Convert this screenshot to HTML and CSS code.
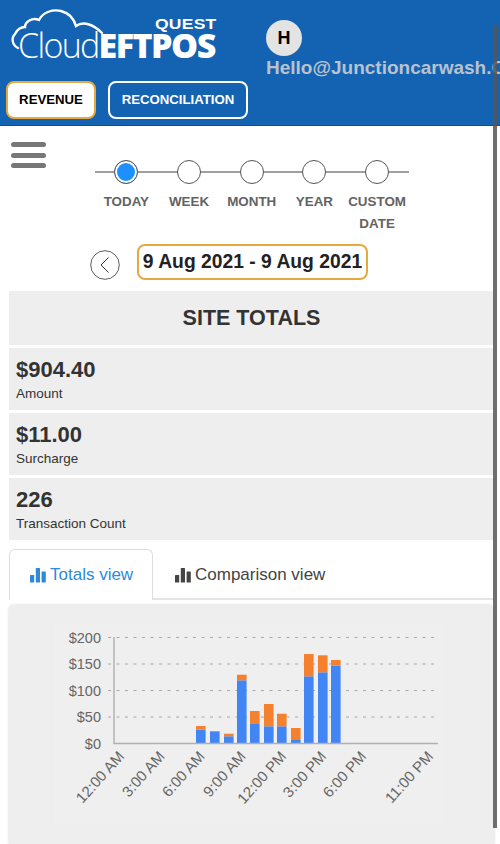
FILE: index.html
```html
<!DOCTYPE html>
<html lang="en">
<head>
<meta charset="utf-8">
<title>CloudEFTPOS</title>
<link rel="stylesheet" href="styles.css">
</head>
<body>
<header class="topbar">
  <div class="brand-row">
    <div class="logo">
      <svg class="logo-cloud" viewBox="0 0 110 50" width="110" height="50" aria-hidden="true">
        <path d="M18 48 C12 45 11 38 15 34 C17 30 21 27 25 27 C25 22 32 17 39 20 C43 12 53 9 61 11 C69 13 74 19 76 26 C83 21 93 24 102 33" fill="none" stroke="#fff" stroke-width="2.4" stroke-linecap="round"/>
      </svg>
      <span class="logo-quest">QUEST</span>
      <span class="logo-text"><span class="logo-cloudword">Cloud</span><span class="logo-eftpos">EFTPOS</span></span>
    </div>
    <div class="user">
      <div class="avatar">H</div>
      <div class="email">Hello@Junctioncarwash.Com</div>
    </div>
  </div>
  <nav class="top-tabs">
    <button class="top-tab active">REVENUE</button>
    <button class="top-tab">RECONCILIATION</button>
  </nav>
</header>

<div class="scroll-thumb"></div>

<main class="content">
  <div class="filter-row">
    <div class="burger"><span></span><span></span><span></span></div>
    <div class="stepper">
      <div class="step-line"></div>
      <div class="step selected"><span class="dot"></span><span class="step-label">TODAY</span></div>
      <div class="step"><span class="dot"></span><span class="step-label">WEEK</span></div>
      <div class="step"><span class="dot"></span><span class="step-label">MONTH</span></div>
      <div class="step"><span class="dot"></span><span class="step-label">YEAR</span></div>
      <div class="step"><span class="dot"></span><span class="step-label">CUSTOM DATE</span></div>
    </div>
  </div>

  <div class="date-row">
    <button class="prev" aria-label="Previous">
      <svg viewBox="0 0 30 30" width="30" height="30"><circle cx="15" cy="15" r="14.3" fill="#fff" stroke="#333" stroke-width="0.8"/><path d="M18.5 7.5 L11 15 L18.5 22.5" fill="none" stroke="#333" stroke-width="1"/></svg>
    </button>
    <div class="date-box">9 Aug 2021 - 9 Aug 2021</div>
  </div>

  <section class="totals">
    <h2 class="totals-title">SITE TOTALS</h2>
    <div class="metric"><div class="metric-value">$904.40</div><div class="metric-label">Amount</div></div>
    <div class="metric"><div class="metric-value">$11.00</div><div class="metric-label">Surcharge</div></div>
    <div class="metric"><div class="metric-value">226</div><div class="metric-label">Transaction Count</div></div>
  </section>

  <div class="view-tabs">
    <div class="view-tab active">
      <svg class="bars-icon" viewBox="0 0 16 16" width="16" height="16"><rect x="0" y="8" width="4.2" height="7.5" rx="0.6"/><rect x="5.8" y="1" width="4.2" height="14.5" rx="0.6"/><rect x="11.6" y="4.5" width="4.2" height="11" rx="0.6"/></svg>
      Totals view
    </div>
    <div class="view-tab">
      <svg class="bars-icon" viewBox="0 0 16 16" width="16" height="16"><rect x="0" y="8" width="4.2" height="7.5" rx="0.6"/><rect x="5.8" y="1" width="4.2" height="14.5" rx="0.6"/><rect x="11.6" y="4.5" width="4.2" height="11" rx="0.6"/></svg>
      Comparison view
    </div>
  </div>

  <section class="chart-card">
    <svg class="chart" viewBox="0 0 485 239" width="485" height="239">
      <rect class="plot-bg" x="45" y="20" width="391" height="198"/>
      <g class="grid">
        <line x1="99" y1="32.5" x2="430" y2="32.5"/>
        <line x1="99" y1="59" x2="430" y2="59"/>
        <line x1="99" y1="85.5" x2="430" y2="85.5"/>
        <line x1="99" y1="112" x2="430" y2="112"/>
      </g>
      <g class="ylabels">
        <text x="92" y="37.5">$200</text>
        <text x="92" y="64">$150</text>
        <text x="92" y="90.5">$100</text>
        <text x="92" y="117">$50</text>
        <text x="92" y="143.5">$0</text>
      </g>
      <g class="bar-blue">
        <rect x="187" y="124.7" width="9.6" height="13.3"/>
        <rect x="201" y="126.3" width="9.6" height="11.7"/>
        <rect x="215" y="131.3" width="9.6" height="6.7"/>
        <rect x="228" y="75.3" width="9.6" height="62.7"/>
        <rect x="241" y="118.3" width="9.6" height="19.7"/>
        <rect x="255" y="121.3" width="9.6" height="16.7"/>
        <rect x="268" y="121.3" width="9.6" height="16.7"/>
        <rect x="282" y="135" width="9.6" height="3"/>
        <rect x="295" y="71.3" width="9.6" height="66.7"/>
        <rect x="309" y="67.3" width="9.6" height="70.7"/>
        <rect x="322" y="60.7" width="9.6" height="77.3"/>
      </g>
      <g class="bar-orange">
        <rect x="187" y="121" width="9.6" height="3.7"/>
        <rect x="215" y="128.7" width="9.6" height="2.6"/>
        <rect x="228" y="69.7" width="9.6" height="5.6"/>
        <rect x="241" y="106" width="9.6" height="12.3"/>
        <rect x="255" y="99" width="9.6" height="22.3"/>
        <rect x="268" y="108.7" width="9.6" height="12.6"/>
        <rect x="282" y="123" width="9.6" height="12"/>
        <rect x="295" y="49" width="9.6" height="22.3"/>
        <rect x="309" y="50.3" width="9.6" height="17"/>
        <rect x="322" y="55" width="9.6" height="5.7"/>
      </g>
      <g class="axis">
        <line x1="105" y1="32" x2="105" y2="139"/>
        <line x1="105" y1="138.5" x2="429" y2="138.5"/>
      </g>
      <g class="xlabels">
        <text transform="translate(116 152) rotate(-48)">12:00 AM</text>
        <text transform="translate(156.500 152) rotate(-48)">3:00 AM</text>
        <text transform="translate(196.500 152) rotate(-48)">6:00 AM</text>
        <text transform="translate(237.500 152) rotate(-48)">9:00 AM</text>
        <text transform="translate(278 152) rotate(-48)">12:00 PM</text>
        <text transform="translate(318 152) rotate(-48)">3:00 PM</text>
        <text transform="translate(358 152) rotate(-48)">6:00 PM</text>
        <text transform="translate(425 152) rotate(-48)">11:00 PM</text>
      </g>
    </svg>
  </section>
</main>
</body>
</html>
```
FILE: styles.css
```css
* { box-sizing: border-box; }
html, body { margin: 0; padding: 0; height: 844px; overflow: hidden; }
body { position: relative; width: 500px; background: #fff; font-family: "Liberation Sans", Arial, sans-serif; color: #333; }

.topbar { height: 126px; background: #1463b3; border-bottom: 1px solid #0f4f91; overflow: hidden; padding: 0 0 0 6px; }
.brand-row { display: flex; height: 81px; }
.logo { position: relative; width: 260px; height: 81px; flex: none; }
.logo-cloud { position: absolute; left: -6px; top: 0; }
.logo-quest { position: absolute; left: 149px; top: 18px; font: bold 14px/12px "Liberation Sans", sans-serif; color: #fff; transform: scaleX(1.25); transform-origin: 0 0; letter-spacing: 0.2px; }
.logo-text { position: absolute; left: 12px; top: 31px; color: #fff; white-space: nowrap; display: flex; align-items: baseline; }
.logo-cloudword { font: 300 34px/28px "Open Sans", sans-serif; letter-spacing: -1.7px; }
.logo-eftpos { font: 800 34px/28px "Open Sans", sans-serif; letter-spacing: -1.5px; }

.user { margin-top: 20px; flex: none; }
.avatar { width: 36px; height: 36px; border-radius: 50%; background: #e3e3e3; color: #000; font: bold 18px/36px "Liberation Sans", sans-serif; text-align: center; }
.email { margin-top: 2px; font: bold 19px/20px "Liberation Sans", sans-serif; color: #b9c2cd; white-space: nowrap; }

.top-tabs { display: flex; gap: 12px; }
.top-tab { height: 38px; border-radius: 8px; border: 2px solid #fff; background: #1463b3; color: #fff; font: bold 13.2px/1 "Liberation Sans", sans-serif; padding: 0; width: 140px; }
.top-tab.active { width: 90px; background: #fff; color: #000; border-color: #e5a93f; }

.scroll-thumb { position: absolute; left: 493px; top: 25px; width: 3.5px; height: 803px; background: #555; z-index: 3; opacity: .85; }

.content { padding-left: 9px; }
.filter-row { position: relative; height: 111px; }
.burger { position: absolute; left: 2px; top: 16px; display: flex; flex-direction: column; gap: 5.5px; }
.burger span { display: block; width: 35px; height: 5px; border-radius: 3px; background: #777; }

.stepper { position: absolute; left: 86px; top: 34px; width: 314px; display: flex; }
.step-line { position: absolute; left: 0; right: 0; top: 11px; height: 2px; background: #a0a0a0; }
.step { position: relative; width: 62.7px; display: flex; flex-direction: column; align-items: center; }
.dot { width: 24px; height: 24px; border-radius: 50%; border: 1px solid #555; background: #fff; position: relative; }
.step.selected .dot { background: #1e8fff; box-shadow: inset 0 0 0 2px #fff; }
.step-label { margin-top: 7px; width: 64px; text-align: center; font: bold 13.4px/22px "Liberation Sans", sans-serif; color: #636363; }

.date-row { display: flex; align-items: center; height: 40px; margin-top: 5px; padding-left: 81px; gap: 17px; }
.prev { width: 30px; height: 30px; padding: 0; border: 0; background: none; margin-top: 5px; display: block; }
.date-box { width: 231px; height: 36px; border: 2px solid #e5a93f; border-radius: 8px; font: bold 19.3px/32px "Liberation Sans", sans-serif; color: #222; text-align: center; white-space: nowrap; }

.totals { margin-top: 9px; width: 485px; }
.totals-title { margin: 0 0 3px; height: 54px; background: #eee; font: bold 21.5px/54px "Liberation Sans", sans-serif; color: #333; text-align: center; }
.metric { height: 62px; margin-bottom: 3px; background: #eee; padding: 10px 7px 0; }
.metric-value { font: bold 22px/24px "Liberation Sans", sans-serif; color: #333; }
.metric-label { margin-top: 3px; font: 13.5px/17px "Liberation Sans", sans-serif; color: #333; }

.view-tabs { display: flex; margin-top: 9px; height: 51px; border-bottom: 2px solid #e4e4e4; width: 485px; }
.view-tab { height: 51px; padding: 0 19px 0 22px; display: flex; align-items: center; gap: 4px; font: 17px/20px "Liberation Sans", sans-serif; color: #444; }
.view-tab.active { width: 144px; padding-left: 20px; padding-right: 0; color: #2c8ad8; background: #fff; border: 1px solid #ddd; border-bottom: 0; border-radius: 6px 6px 0 0; }
.bars-icon { fill: currentColor; flex: none; }

.chart-card { margin-top: 5px; width: 485px; height: 239px; background: #eee; border-radius: 5px 5px 0 0; box-shadow: 0 0 3px rgba(0,0,0,.18); }
.chart { display: block; }
.plot-bg { fill: #efefef; }
.grid line { stroke: #a8a8a8; stroke-width: 1; stroke-dasharray: 3 5.5; }
.axis line { stroke: #b0b0b0; stroke-width: 1.4; }
.bar-blue rect { fill: #4285f4; }
.bar-orange rect { fill: #f5812f; }
.ylabels text { font: 14.5px "Liberation Sans", sans-serif; fill: #666; text-anchor: end; }
.xlabels text { font: 15px "Liberation Sans", sans-serif; fill: #666; text-anchor: end; }
```
